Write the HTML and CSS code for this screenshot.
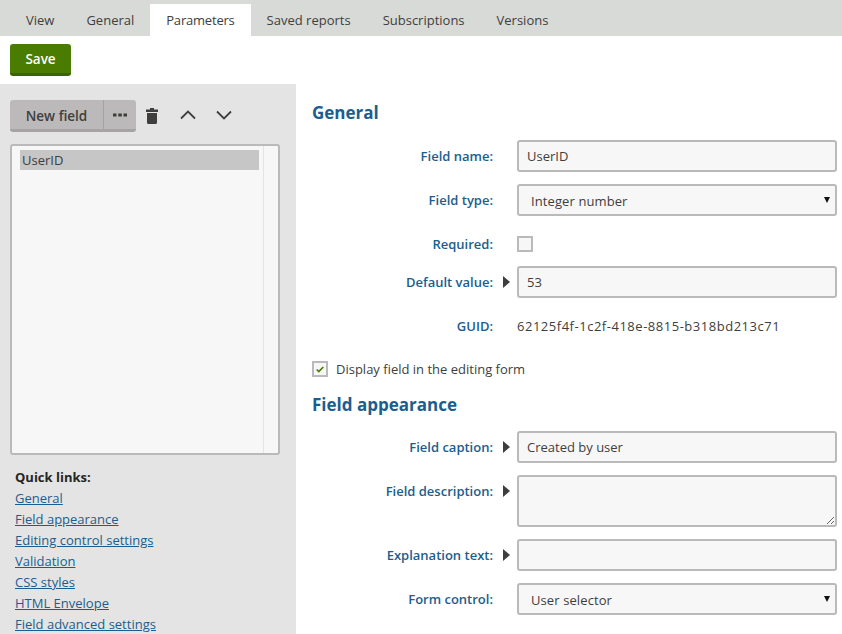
FILE: index.html
```html
<!DOCTYPE html>
<html lang="en">
<head>
    <meta charset="UTF-8">
    <title>Parameters</title>
    <link rel="stylesheet" href="styles.css">
</head>
<body>
    <!-- tabs -->
    <nav class="tabs">
        <a class="tab">View</a>
        <a class="tab">General</a>
        <a class="tab active">Parameters</a>
        <a class="tab">Saved reports</a>
        <a class="tab">Subscriptions</a>
        <a class="tab">Versions</a>
    </nav>

    <div class="toolbar">
        <button class="btn-save">Save</button>
    </div>

    <div class="content">
        <!-- field list -->
        <aside class="sidebar">
            <div class="field-actions">
                <div class="btn-group">
                    <button class="btn-new">New field</button>
                    <button class="btn-more">
                        <svg width="14" height="4" viewBox="0 0 14 4"><path d="M0 0.5h3.5v3H0zM5.3 0.5h3.5v3H5.3zM10.5 0.5H14v3h-3.5z" fill="#403e3d"/></svg>
                    </button>
                </div>
                <button class="icon-btn trash">
                    <svg width="12" height="16" viewBox="0 0 12 16"><path d="M4 0h4v1.5h4V4H0V1.5h4zM1 5h10v9.5a1.5 1.5 0 0 1-1.500 1.500H2.500A1.500 1.500 0 0 1 1 14.500z" fill="#403e3d"/></svg>
                </button>
                <button class="icon-btn up">
                    <svg width="16" height="10" viewBox="0 0 16 10"><path d="M1 8.500l7-7 7 7" fill="none" stroke="#403e3d" stroke-width="1.800"/></svg>
                </button>
                <button class="icon-btn down">
                    <svg width="16" height="10" viewBox="0 0 16 10"><path d="M1 1.500l7 7 7-7" fill="none" stroke="#403e3d" stroke-width="1.800"/></svg>
                </button>
            </div>
            <div class="field-list">
                <div class="list-items">
                    <div class="list-item">UserID</div>
                </div>
                <div class="list-scroll"></div>
            </div>
            <div class="quick-links">
                <strong>Quick links:</strong>
                <a href="#">General</a>
                <a href="#">Field appearance</a>
                <a href="#">Editing control settings</a>
                <a href="#">Validation</a>
                <a href="#">CSS styles</a>
                <a href="#">HTML Envelope</a>
                <a href="#">Field advanced settings</a>
            </div>
        </aside>

        <!-- field properties -->
        <main class="form">
            <h2 class="heading-general">General</h2>

            <div class="row row-first">
                <label class="label">Field name:</label>
                <input class="input" type="text" value="UserID">
            </div>
            <div class="row">
                <label class="label">Field type:</label>
                <div class="select">Integer number<span class="caret"></span></div>
            </div>
            <div class="row row-check">
                <label class="label">Required:</label>
                <span class="checkbox"></span>
            </div>
            <div class="row row-default">
                <label class="label">Default value:<span class="arrow"></span></label>
                <input class="input" type="text" value="53">
            </div>
            <div class="row row-guid">
                <label class="label">GUID:</label>
                <span class="value">62125f4f-1c2f-418e-8815-b318bd213c71</span>
            </div>

            <div class="display-check">
                <span class="checkbox">
                    <svg width="8" height="7" viewBox="0 0 8 7"><path d="M0.700 3.500l2.100 2.100L7.300 1" fill="none" stroke="#497c00" stroke-width="1.700"/></svg>
                </span>
                Display field in the editing form
            </div>

            <h2 class="heading-appearance">Field appearance</h2>

            <div class="row row-caption">
                <label class="label">Field caption:<span class="arrow"></span></label>
                <input class="input" type="text" value="Created by user">
            </div>
            <div class="row row-top">
                <label class="label">Field description:<span class="arrow"></span></label>
                <textarea class="input area"></textarea>
            </div>
            <div class="row">
                <label class="label">Explanation text:<span class="arrow"></span></label>
                <input class="input" type="text">
            </div>
            <div class="row">
                <label class="label">Form control:</label>
                <div class="select">User selector<span class="caret"></span></div>
            </div>
        </main>
    </div>
</body>
</html>
```

FILE: styles.css
```css
html, body {
    height: 100%;
}
body {
    margin: 0;
    height: 634px;
    overflow: hidden;
    background-color: white;
    color: #403e3d;
    font-family: "Open Sans", "Noto Sans", Arial, sans-serif;
    font-size: 13px;
    display: flex;
    flex-direction: column;
}
button {
    font-family: inherit;
    cursor: pointer;
}

/* tabs */
.tabs {
    height: 36px;
    flex: none;
    box-sizing: border-box;
    padding: 4px 0 0 10px;
    background-color: #d8dad7;
    display: flex;
}
.tab {
    padding: 0 16px;
    line-height: 32px;
}
.tab.active {
    background-color: white;
    letter-spacing: -0.2px;
}

.toolbar {
    height: 48px;
    flex: none;
    box-sizing: border-box;
    padding: 8px 10px 0;
}
.btn-save {
    width: 61px;
    height: 32px;
    padding: 1px 0 0;
    border: none;
    border-bottom: 3px solid #3b6300;
    border-radius: 3px;
    background-color: #497c00;
    color: white;
    font-size: 13.500px;
    font-weight: 600;
}

.content {
    flex: 1;
    display: flex;
    min-height: 0;
}

/* left column */
.sidebar {
    width: 296px;
    flex: none;
    box-sizing: border-box;
    padding: 16px 16px 0 10px;
    background-color: #e4e4e4;
}
.field-actions {
    display: flex;
    align-items: center;
    height: 32px;
}
.btn-group {
    display: flex;
    height: 32px;
    border-bottom: 3px solid #a5a3a3;
    box-sizing: border-box;
    border-radius: 3px;
    background-color: #bbb9b9;
}
.btn-new {
    width: 94px;
    padding: 2px 0 0;
    border: none;
    border-right: 1px solid #a5a3a3;
    background: none;
    color: #403e3d;
    font-size: 13.500px;
    font-weight: 600;
}
.btn-more {
    width: 32px;
    padding: 0;
    border: none;
    background: none;
    display: flex;
    align-items: center;
    justify-content: center;
}
.icon-btn {
    padding: 0;
    border: none;
    background: none;
    display: flex;
}
.trash {
    margin: -1px 0 0 10px;
}
.up {
    margin: -2px 0 0 22px;
}
.down {
    margin: -2px 0 0 20px;
}
.field-list {
    margin-top: 12px;
    height: 311px;
    box-sizing: border-box;
    display: flex;
    border: 2px solid #bbb9b9;
    border-radius: 3px;
    background-color: #f7f7f7;
}
.list-items {
    flex: 1;
    padding: 4px 4px 0 8px;
}
.list-item {
    height: 20px;
    line-height: 20px;
    padding-left: 2px;
    background-color: #c6c6c6;
}
.list-scroll {
    width: 14px;
    border-left: 1px solid #e4e4e4;
}
.quick-links {
    margin-top: 12px;
    padding-left: 5px;
    display: flex;
    flex-direction: column;
    align-items: flex-start;
    line-height: 21px;
}
.quick-links strong {
    color: #262524;
    font-weight: 700;
}
.quick-links a {
    color: #1b5e8e;
}

/* right column */
.form {
    flex: 1;
    padding: 0 5px 0 16px;
}
h2 {
    margin: 0;
    color: #1b5e8e;
    font-size: 17px;
    font-weight: 700;
    line-height: 24px;
}
.heading-general {
    margin-top: 17px;
}
.heading-appearance {
    margin-top: 16px;
}
.row {
    display: flex;
    align-items: center;
    margin-top: 12px;
}
.row-first {
    margin-top: 15px;
}
.row-check {
    margin-top: 18px;
}
.row-default {
    margin-top: 12px;
}
.row-guid {
    margin-top: 18px;
}
.row-caption {
    margin-top: 14px;
}
.row-top {
    align-items: flex-start;
}
.row-top .label {
    margin-top: 6px;
}
.label {
    position: relative;
    width: 181px;
    flex: none;
    margin-right: 24px;
    color: #1b5e8e;
    font-weight: 600;
    text-align: right;
    line-height: 20px;
}
.arrow {
    position: absolute;
    top: 4px;
    right: -17px;
    border-left: 7px solid #403e3d;
    border-top: 6px solid transparent;
    border-bottom: 6px solid transparent;
}
.input, .select {
    width: 320px;
    height: 32px;
    box-sizing: border-box;
    border: 2px solid #bbb9b9;
    border-radius: 3px;
    background-color: #f7f7f7;
    color: #403e3d;
    font-family: inherit;
    font-size: 13px;
    padding: 0 8px;
    margin: 0;
}
.area {
    display: block;
    height: 52px;
}
.select {
    position: relative;
    padding-left: 12px;
    line-height: 30px;
    letter-spacing: 0.1px;
}
.caret {
    position: absolute;
    top: 11px;
    right: 5px;
    border-top: 6px solid #111;
    border-left: 3.500px solid transparent;
    border-right: 3.500px solid transparent;
}
.value {
    letter-spacing: 0.520px;
}
.checkbox {
    width: 16px;
    height: 16px;
    box-sizing: border-box;
    border: 2px solid #bbb9b9;
    background-color: #f7f7f7;
    display: flex;
    align-items: center;
    justify-content: center;
}
.display-check {
    margin-top: 25px;
    display: flex;
    align-items: center;
    gap: 8px;
    line-height: 16px;
}
```
